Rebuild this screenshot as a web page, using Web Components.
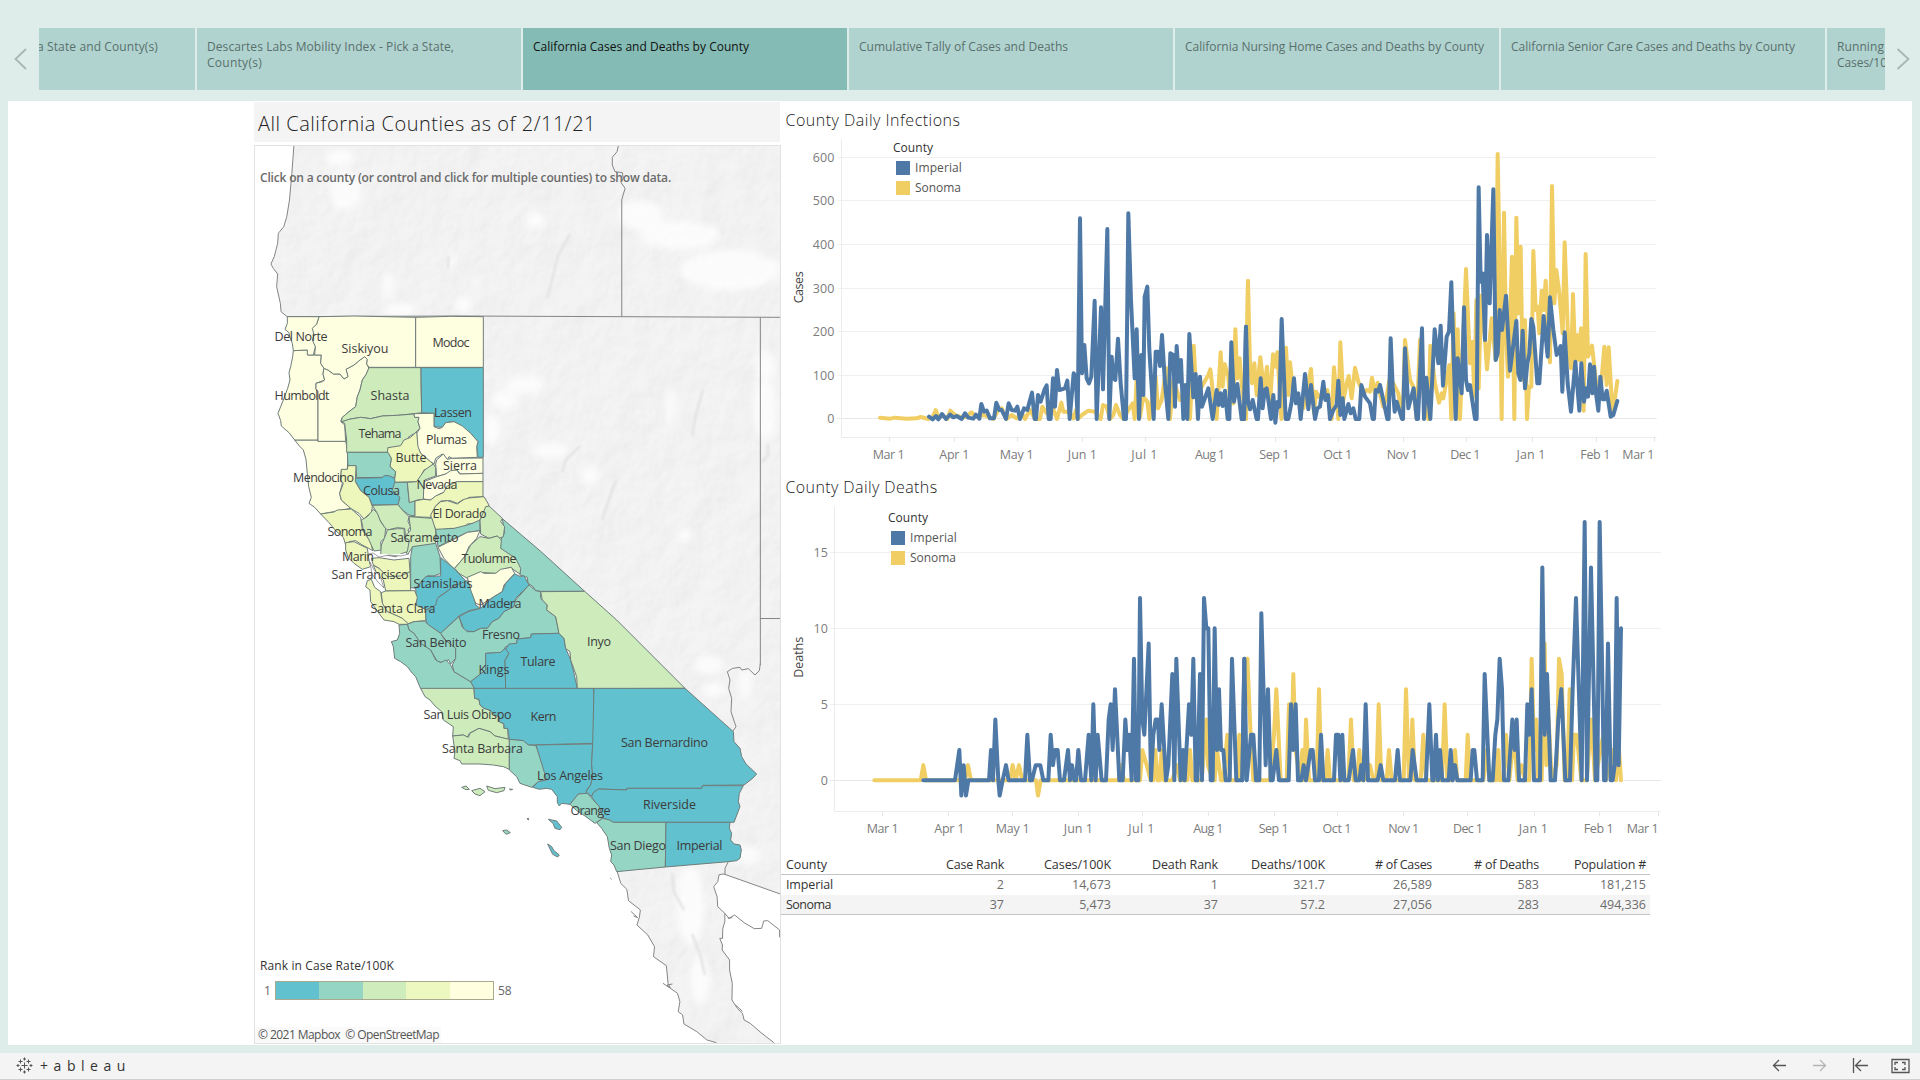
<!DOCTYPE html>
<html lang="en">
<head>
<meta charset="utf-8">
<title>California Cases and Deaths by County</title>
<style>
html,body{margin:0;height:100%;overflow:hidden}
body{font-family:"Open Sans","Noto Sans",sans-serif;font-weight:300;font-size:12px;color:#333}
</style>
</head>
<body>
<story-app></story-app>
<script>
const define = (name, html, after) => {
  const t = document.createElement('template');
  t.innerHTML = html;
  customElements.define(name, class extends HTMLElement {
    connectedCallback() {
      if (this.shadowRoot) return;
      const root = this.attachShadow({mode: 'open'});
      root.appendChild(t.content.cloneNode(true));
      if (after) after(root, this);
    }
  });
};

/* Text set to a fixed measure by adjusting its tracking. */
define('fit-text', `<style>:host{display:block;white-space:nowrap}span{display:inline-block}</style><span><slot></slot></span>`, (root, el) => {
  const s = root.querySelector('span');
  const natural = s.getBoundingClientRect().width;
  s.style.letterSpacing = ((+el.getAttribute('w') - natural) / el.textContent.length) + 'px';
});

define('story-tab', `<style>
:host{display:block;box-sizing:border-box;flex:0 0 324px;height:62px;padding:11px 10px;background:#b1d3cf;color:#58706d;line-height:16px;font-weight:400}
:host([active]){background:#84bbb4;color:#111}
:host([tail]){padding-left:166px}
</style><slot></slot>`);

define('story-nav', `<style>
:host{display:flex;height:62px;padding:28px 0 11px}
.clip{flex:1;overflow:hidden;display:flex}
.strip{display:flex;gap:2px;margin-left:-168px}
svg{display:block;flex:none;fill:none;stroke:#a9b5b2;stroke-width:1.8}
</style>
<svg width="39" height="62"><path d="M26 21L15.5 31L26 41"/></svg>
<div class="clip"><div class="strip">
<story-tab tail><fit-text w="121">a State and County(s)</fit-text></story-tab>
<story-tab><fit-text w="247">Descartes Labs Mobility Index - Pick a State,</fit-text><fit-text w="55">County(s)</fit-text></story-tab>
<story-tab active><fit-text w="216">California Cases and Deaths by County</fit-text></story-tab>
<story-tab><fit-text w="209">Cumulative Tally of Cases and Deaths</fit-text></story-tab>
<story-tab><fit-text w="299">California Nursing Home Cases and Deaths by County</fit-text></story-tab>
<story-tab><fit-text w="284">California Senior Care Cases and Deaths by County</fit-text></story-tab>
<story-tab><fit-text w="47">Running</fit-text><fit-text w="64">Cases/100K</fit-text></story-tab>
</div></div>
<svg width="35" height="62"><path d="M12.5 21L23.5 31L12.5 41"/></svg>`);

const BLUE='#62c1cf', TEAL='#94d5c4', GREEN='#cdebbb', LIME='#edf7bb', CREAM='#fefee0';
/* Each sheet of counties is drawn at three times map scale from its own origin. */
const north = [
[CREAM,'122,420 192,420 192,424 275,424 282,455 280,508 262,510 260,540 265,550 257,580 262,600 290,625 240,635 200,642 182,622 165,610 172,592 164,560 160,520 156,478 148,450 136,438'],
[CREAM,'118,152 160,150 162,165 202,165 200,190 210,205 207,222 212,240 186,250 186,268 192,275 192,420 122,420 105,398 82,378 80,362 72,340 82,315 90,295 101,265 108,240 105,218 110,200 116,170'],
[CREAM,'210,205 222,210 238,222 258,222 270,237 282,230 276,208 300,195 318,180 332,170 340,178 338,192 345,205 336,224 325,240 318,270 310,290 305,320 285,335 265,352 260,364 272,375 275,424 192,424 192,275 186,266 186,250 205,245 212,240 207,222'],
[CREAM,'195,50 300,48 485,52 485,202 345,202 338,192 340,178 332,170 318,180 300,195 276,208 282,230 270,237 258,222 238,222 222,210 210,205 200,190 202,165 182,165 184,140 172,122 180,105 172,85 188,72'],
[CREAM,'100,50 195,50 188,72 175,85 180,105 175,120 184,140 178,165 160,165 160,150 118,152 115,130 108,112 105,98 93,88 100,70'],
[CREAM,'485,52 590,49 688,50 688,202 485,202'],
[GREEN,'345,203 501,203 501,250 503,338 481,341 430,346 385,348 350,356 320,352 285,358 262,366 265,352 285,335 305,320 310,290 318,270 325,240 336,224'],
[BLUE,'501,203 688,203 688,472 672,472 668,440 672,425 650,400 600,365 575,368 565,382 540,380 540,340 503,338'],
[GREEN,'262,366 285,358 320,352 350,356 385,348 430,346 480,342 482,352 495,352 492,365 498,385 482,400 465,410 448,440 420,445 402,443 405,457 278,457 278,420 272,370'],
[CREAM,'480,341 540,340 540,380 555,386 565,382 575,368 600,365 625,378 650,400 672,425 668,440 670,472 595,475 585,470 580,480 565,462 545,475 540,492 525,482 500,460 490,440 488,400 498,385 492,365 495,352 482,352'],
[LIME,'488,395 492,440 500,460 538,492 530,502 510,510 500,530 488,545 420,547 425,515 408,500 412,475 400,458 402,443 440,437 450,420 470,412'],
[TEAL,'280,457 402,457 412,475 408,500 425,515 422,533 402,532 400,527 388,532 308,533 306,498 282,497'],
[BLUE,'300,535 385,533 390,527 405,527 422,535 424,555 415,570 438,592 432,614 355,615 345,592 320,572 308,550'],
[LIME,'262,508 280,508 282,497 306,497 304,545 320,572 345,592 355,620 352,640 342,645 330,657 315,640 290,625 262,600 257,580 268,550 260,540'],
[TEAL,'422,547 460,547 462,570 466,607 483,602 483,648 465,645 445,630 432,614 438,592 415,570'],
[GREEN,'460,547 488,545 500,527 512,510 538,492 545,502 545,528 512,540 508,598 490,600 466,608'],
[CREAM,'545,492 548,480 568,462 580,478 595,475 687,474 687,520 620,522 608,510 590,518 575,522 548,530'],
[CREAM,'510,545 548,530 575,522 590,512 608,510 617,522 687,520 687,545 610,545 592,550 580,560 575,575 558,582 540,592 530,600 508,597'],
[LIME,'508,598 530,600 545,588 568,578 580,558 610,545 687,545 687,590 645,592 635,600 625,600 610,610 590,602 560,603 545,618 530,652 466,650 483,648 483,603'],
[LIME,'545,618 560,605 580,602 610,612 630,598 645,594 690,590 705,615 695,650 680,656 672,670 640,672 622,688 590,685 560,690 545,688 535,665 530,645'],
[LIME,'200,642 240,636 250,630 292,627 320,652 325,690 350,725 356,752 344,745 325,735 305,722 285,725 275,735 268,712 245,692 225,668'],
[GREEN,'322,660 340,650 358,628 372,640 380,665 395,685 392,715 380,725 382,750 360,753 345,720 328,690'],
[GREEN,'355,616 432,614 445,630 465,650 462,665 470,680 462,690 470,710 455,712 452,685 430,683 400,690 392,682 378,660 370,640'],
[GREEN,'465,650 534,655 545,690 545,732 475,742 460,765 455,750 466,720 452,712 470,690'],
[GREEN,'395,705 400,690 430,686 450,686 452,715 466,720 460,755 445,760 425,770 395,765 380,765 382,735'],
[LIME,'275,728 300,725 320,735 340,745 345,780 350,800 325,808 300,790 282,772 275,750'],
];
const mid = [
[TEAL,'545,118 600,115 640,105 660,98 678,90 678,122 640,127 590,150 552,170'],
[CREAM,'552,172 600,148 640,127 678,122 668,145 645,170 632,200 600,237 570,205'],
[TEAL,'745,86 860,184 992,304 860,304 845,302 835,288 822,280 820,262 798,255 798,240 785,225 785,208 745,182 738,170 740,150 752,128'],
[GREEN,'695,50 705,48 745,85 740,95 752,110 748,140 735,145 730,138 705,145 680,132 678,90'],
[GREEN,'678,140 705,145 730,138 742,150 740,175 785,205 800,235 798,252 780,240 770,232 740,240 725,250 690,248 640,265 615,250 602,235 632,200 650,165'],
[TEAL,'475,170 545,160 558,200 560,250 540,258 520,257 510,268 485,295 470,293 470,200'],
[BLUE,'560,203 600,235 640,278 600,288 585,300 555,320 548,345 515,360 488,350 485,295 515,260 560,258'],
[BLUE,'550,325 585,300 600,288 640,272 655,300 665,345 678,355 645,362 615,378 560,430 520,402 515,385 515,362 545,345'],
[CREAM,'640,262 680,245 690,250 725,250 740,238 772,232 782,250 750,285 745,305 720,320 680,345 665,340 650,300'],
[BLUE,'615,380 645,364 680,355 720,320 745,305 755,280 782,252 800,260 810,257 825,285 785,325 780,350 750,365 735,385 715,395 700,415 680,415 660,425 630,423 625,405'],
[LIME,'352,205 375,203 420,210 465,205 468,245 440,262 400,260 375,235 358,225'],
[LIME,'358,226 375,235 400,260 440,258 468,245 470,302 395,303 388,270 370,255'],
[LIME,'382,308 395,303 482,302 490,322 485,345 515,358 515,392 480,395 460,402 445,385 430,378 400,365 385,340'],
[LIME,'340,272 352,268 362,292 380,305 385,340 400,365 430,378 445,385 465,403 435,403 420,395 390,390 375,370 350,335 348,300 335,290'],
[TEAL,'460,403 480,395 512,393 520,402 560,430 572,450 605,470 605,505 590,522 583,508 575,518 550,515 530,480 500,460 480,430 465,420'],
[TEAL,'435,405 460,403 465,420 480,430 500,460 530,480 545,510 560,518 575,510 590,525 600,545 650,575 662,596 500,596 485,560 475,550 460,530 440,515 422,505 418,470 412,455 430,450 437,430'],
[TEAL,'560,430 615,380 625,412 640,425 660,425 680,415 700,415 715,395 735,385 750,365 780,350 785,330 825,285 845,302 860,305 860,325 880,345 878,360 905,380 915,430 832,432 830,443 790,447 788,460 755,470 745,487 695,490 695,540 650,575 600,545 595,525 605,505 605,475 575,450'],
[BLUE,'695,490 740,487 755,473 765,490 753,510 755,596 662,596 650,575 695,540'],
[BLUE,'755,478 765,462 788,460 790,447 830,443 832,432 915,430 930,445 935,475 950,510 960,550 970,596 755,596 753,512 765,490'],
[GREEN,'860,305 992,304 1088,390 1190,492 1293,595 970,596 968,560 950,510 948,485 935,475 930,445 915,430 905,380 878,360 880,345 865,330'],
];
const south = [
[GREEN,'122,205 282,205 284,235 297,238 300,255 312,265 328,270 345,285 358,290 358,305 372,312 372,325 383,325 385,358 345,348 330,335 297,325 268,340 262,352 250,345 218,348 220,320 190,300 185,275 165,258 150,240 135,230'],
[BLUE,'282,205 640,205 642,225 640,370 445,375 430,362 388,358 383,325 372,325 372,312 358,305 358,290 345,285 328,270 312,265 300,255 297,238 284,235'],
[GREEN,'218,348 250,345 265,352 270,340 297,325 330,335 345,348 388,358 388,448 370,440 340,435 300,432 245,432 240,422 222,415 225,395'],
[TEAL,'388,358 430,362 445,375 468,377 485,425 498,460 500,478 475,485 455,502 420,490 410,470 388,450'],
[BLUE,'468,375 638,372 635,430 638,470 632,495 620,510 618,522 595,522 570,553 545,550 538,558 532,548 532,530 515,508 500,505 478,508 458,502 475,485 500,480'],
[BLUE,'642,205 915,205 1060,335 1062,365 1080,385 1085,410 1098,432 1130,462 1118,475 1092,495 968,496 965,505 740,505 740,510 655,507 638,520 635,530 618,515 632,495 638,470 635,430 638,372'],
[BLUE,'635,530 640,518 655,507 740,510 740,505 965,505 968,497 1090,497 1078,520 1075,545 1080,560 1062,607 700,607 688,600 668,595 658,560 645,545'],
[TEAL,'570,553 595,522 622,520 658,560 662,575 672,592 645,610 615,588 590,572'],
[TEAL,'650,608 668,595 688,600 700,607 858,607 856,741 710,755 702,735 692,725 695,705 688,685 682,650 665,625'],
[BLUE,'858,607 1050,607 1048,625 1055,640 1052,660 1062,672 1080,675 1084,690 1080,715 1070,722 1045,725 856,741'],
[GREEN,'245,502 258,498 268,508 258,509'],[GREEN,'275,512 300,505 315,515 300,527 285,522'],
[GREEN,'320,498 345,506 375,502 372,512 350,518 325,511'],
[TEAL,'368,632 380,630 391,638 378,643'],[BLUE,'505,598 530,603 545,622 540,629 525,625 519,610'],
[BLUE,'503,672 515,680 522,692 538,705 533,711 518,703'],[GREEN,'388,507 398,508 392,510'],[TEAL,'441,596 446,595 445,600'],
];
/* County label: text, centre x, centre y, width, in map pixels. */
const labels = [['Del Norte',301,337,53],['Siskiyou',365,349,47],['Modoc',451,342.5,37],['Humboldt',302,396,55],['Shasta',390,396,39],['Lassen',453,413,38],['Tehama',380,434,43],['Plumas',446.5,439.5,41],['Butte',411,458,31],['Sierra',460,466,34],['Mendocino',323.5,477.5,61],['Colusa',381.5,491,37],['Nevada',437,485,41],['El Dorado',459.5,514,54],['Sonoma',350,532,45],['Sacramento',424.5,538,68],['Marin',358,557,32],['San Francisco',370,574.5,77],['Tuolumne',489,558.5,55],['Stanislaus',443,583.5,59],['Santa Clara',403,609,65],['Madera',500,604,43],['San Benito',436,643,61],['Fresno',501,634.5,38],['Inyo',599,641.5,24],['Kings',494,670,31],['Tulare',538,661.5,35],['San Luis Obispo',467.5,715,88],['Kern',543.5,717,26],['San Bernardino',664.5,742.5,87],['Santa Barbara',482.5,749,81],['Los Angeles',570,775.5,66],['Riverside',669.5,805,53],['Orange',590.5,810.5,40],['San Diego',638,845.500,56],['Imperial',699.5,845.500,46]];

const coastOR='118,18 112,100 105,180 97,230 88,260 72,280 70,310 60,350 50,372 57,385 70,402 67,440 78,490 80,515 98,530';
const coastBaja='1075,66 1085,100 1103,118 1108,152 1143,180 1140,202 1133,225 1165,255 1185,290 1182,320 1220,347 1225,400 1232,415 1253,430 1260,455 1255,485 1268,495 1272,522 1310,545 1340,570 1368,578';
const coastGulf='1390,72 1376,74 1372,95 1360,110 1370,140 1372,170 1393,190 1393,215 1387,235 1386,265 1378,265 1386,285 1385,300 1407,330 1407,360 1415,400 1414,450 1430,475 1445,490 1450,510 1468,520 1500,548 1538,578';
const P6='translate(254 140) scale(.33801 .33333)', P11='translate(254 850) scale(.33801 .33333)';
const white=[[340,158,14,9],[345,190,16,20],[535,220,10,8],[451,262,4,10],[530,240,4,3],[388,285,5,14],[400,310,16,7],[463,305,8,9],[475,280,3,6],[640,215,22,15],[680,235,40,14],[730,270,50,20],[525,385,20,9],[505,400,12,10],[550,450,18,8],[492,430,8,16],[765,410,12,30],[670,405,4,18],[590,475,10,10],[685,535,8,6],[745,685,6,16],[710,665,14,10],[690,905,14,40],[700,980,10,25],[745,855,15,10],[765,365,10,16],[715,690,12,7]];
const ridges=['M570 234L558 256L552 280L547 298','M703 390L696 414L692 436','M580 446L566 460L562 472','M616 480L606 508L602 520','M672 873L674 892L684 910','M692 934L700 954L705 975','M768 445L768 455L762 462','M448 256V268'];

define('county-map', `<style>
:host{display:block;box-sizing:border-box;width:527px;height:899px;border:1px solid #e2e2e2;position:relative;overflow:hidden;background:#fff}
svg{display:block;margin:-1px}
.edge path,.edge polyline{fill:none;stroke:#858585;stroke-width:1;vector-effect:non-scaling-stroke}
polygon{stroke:#6f7d7a;stroke-width:1;stroke-linejoin:round;vector-effect:non-scaling-stroke}
text{font:400 12.5px "Open Sans","Noto Sans",sans-serif;text-anchor:middle;fill:#3c3c3c}
.hint,.legend,.credit{position:absolute;left:5px;color:#6b6b6b}
.hint{top:24px;font-weight:600;line-height:16px}
.legend{top:812px;font-weight:400;color:#333;line-height:16px}
.ramp{display:flex;align-items:center;gap:4px;margin:7px 0 0 4px;color:#666}
.bar{display:flex;box-sizing:border-box;width:219px;height:19px;border:1px solid #a9a98f}
.bar i{flex:1}
.credit{left:0;bottom:0;padding:0 2px 0 3px;line-height:16px;font-weight:400;background:#fafafa;color:#555}
</style>
<svg width="527" height="899" viewBox="254 145 527 899">
<defs>
<filter id="relief" x="0" y="0" width="100%" height="100%" color-interpolation-filters="sRGB">
<feTurbulence type="fractalNoise" baseFrequency=".028 .024" numOctaves="4" seed="8" result="n"/>
<feDiffuseLighting in="n" surfaceScale="1.6" diffuseConstant="1.1" lighting-color="#fff"><feDistantLight azimuth="225" elevation="60"/></feDiffuseLighting>
<feColorMatrix type="matrix" values=".22 0 0 0 .738 0 .22 0 0 .738 0 0 .22 0 .738 0 0 0 1 0"/>
</filter>
<filter id="soft" x="-30%" y="-30%" width="160%" height="160%"><feGaussianBlur stdDeviation="3.5"/></filter>
<filter id="soft1"><feGaussianBlur stdDeviation="1"/></filter>
<clipPath id="land">
<polygon transform="${P6}" points="${coastOR} 1560,532 1560,18"/>
<polygon points="287,316 781,316 781,894 724,874 640,869 640,800 610,780 540,740 470,690 435,640 425,540 350,500 310,400"/>
<polygon transform="${P11}" points="${coastBaja} 1538,578 ${coastGulf.split(' ').reverse().join(' ')} 1402,38"/>
</clipPath>
</defs>
<g clip-path="url(#land)"><rect x="254" y="145" width="527" height="899" filter="url(#relief)"/>
<g id="w" fill="#fff" opacity=".75" filter="url(#soft)"></g>
<g fill="none" stroke="#e2e2e2" stroke-width="2.4" filter="url(#soft1)">${ridges.map(d=>`<path d="${d}"/>`).join('')}</g></g>
<g class="edge">
<g transform="${P6}"><polyline points="${coastOR}"/><path d="M98 530L600 528L1557 532M1078 18L1074 35L1060 52L1060 75L1068 95L1090 98L1092 115L1086 128L1098 145L1092 165L1088 180V530M1498 532V1575"/></g>
<path d="M760 618.5H781"/>
<g transform="translate(380 620) scale(.33333)"><path d="M1141 130L1138 152L1125 165L1105 146L1085 150L1080 142L1058 145L1042 155L1050 180L1046 205L1055 235L1053 275L1068 320L1058 335M1045 725L1035 745V764"/></g>
<g transform="${P11}"><polyline points="${coastBaja}"/><polyline points="${coastGulf}"/><path d="M1390 72L1557 132M1393 190L1405 205L1422 195L1450 218L1480 236L1502 235L1508 213L1520 212L1555 240V262M1115 184L1135 203L1123 198M1210 400L1232 415L1222 405L1238 402M1054 84L1058 88M1425 465L1445 484M1402 205L1415 203"/></g>
</g>
<g id="n" transform="translate(254 300) scale(.33333)"></g>
<g id="m" transform="translate(254 490) scale(.33333)"></g>
<g id="s" transform="translate(380 620) scale(.33333)"></g>
<path d="M368 554l5 -1 6 4 10 -2 12 1 8 -2M370 562l4 8 6 6 4 12-6-6-6-8z" fill="#fff" stroke="#8c8c8c" stroke-width=".8"/>
<g id="t"></g>
</svg>
<fit-text class="hint" w="411">Click on a county (or control and click for multiple counties) to show data.</fit-text>
<div class="legend"><fit-text w="134">Rank in Case Rate/100K</fit-text>
<div class="ramp"><span>1</span><div class="bar"><i style="background:#62c1cf"></i><i style="background:#94d5c4"></i><i style="background:#cfecbc"></i><i style="background:#edf7c0"></i><i style="background:#ffffdf"></i></div><span>58</span></div></div>
<fit-text class="credit" w="181">© 2021 Mapbox&nbsp; © OpenStreetMap</fit-text>`, root => {
  const poly = a => a.map(([f, p]) => `<polygon fill="${f}" points="${p}"/>`).join('');
  root.getElementById('n').innerHTML = poly(north);
  root.getElementById('m').innerHTML = poly(mid);
  root.getElementById('s').innerHTML = poly(south);
  root.getElementById('w').innerHTML = white.map(([x,y,a,b]) => `<ellipse cx="${x}" cy="${y}" rx="${a}" ry="${b}"/>`).join('');
  root.getElementById('t').innerHTML = labels.map(([s,x,y,w]) => `<text x="${x}" y="${y+4.3}" textLength="${w}">${s}</text>`).join('');
});

define('color-legend', `<style>
:host{display:flex;flex-direction:column;gap:4px;line-height:16px;color:#555;font-weight:400}
.h{font-weight:500;color:#333}
.r{display:flex;align-items:center;gap:5px;padding-left:3px}
i{width:14px;height:14px;background:#4e79a7}.y{background:#f0ce63}
</style><fit-text class="h" w="40">County</fit-text>
<div class="r"><i></i><fit-text w="47">Imperial</fit-text></div><div class="r"><i class="y"></i><fit-text w="46">Sonoma</fit-text></div>`);

/* Series points are on a 3x grid from the chart origin; the second half starts 1380 units in. */
const xy = s => s.trim().split(/\s+/);
const val = s => xy(s).map(p => { const [x, v] = p.split(':'); return x + ',' + (931 - 45.6 * v).toFixed(1); });
const charts = {
cases: {h:370, left:184, right:2630, top:118, bottom:1012, zero:956, title:'Cases', ty:562, tw:32, labelY:1063, endY:16,
 grid:[[600,172],[500,301],[400,433],[300,565],[200,695],[100,827],[0,956]],
 ticks:[['Mar 1',326,329],['Apr 1',523,523],['May 1',710,712],['Jun 1',907,907],['Jul 1',1093,1097],['Aug 1',1290,1291],['Sep 1',1483,1487],['Oct 1',1673,1675],['Nov 1',1867,1871],['Dec 1',2056,2059],['Jan 1',2253,2256],['Feb 1',2446,2450],['Mar 1',2575,2622]],
 yellow:[xy(`300,953 330,956 345,953 380,956 410,955 422,951 445,957 458,952 467,930 475,952 490,947 502,957 511,932 525,945 545,952 560,950 574,937 590,950 610,945 640,957 655,930 665,925 680,957 695,945 710,955 725,940 735,957 750,930 765,957 780,957 787,920 800,940 819,925 831,957 844,908 850,935 860,935 870,940 880,955 888,930 893,957 906,945 925,932 945,935 962,957 969,915 980,920 990,957 1000,945 1008,915 1020,945 1030,957 1045,930 1058,910 1064,957 1070,840 1080,950 1090,890 1102,905 1108,957 1120,870 1127,830 1134,925 1145,900 1155,830 1162,805 1170,957 1180,840 1190,870 1200,900 1215,880 1230,957 1241,737 1250,900 1265,860 1285,825 1291,808 1298,870 1310,957 1322,757 1328,860 1334,792 1345,830 1350,900 1360,910 1366,688 1372,835 1379,775 1385,850 1397,957 1404,543`),
 xy(`18,957 24,543 30,800 36,850 43,790 50,885 61,772 72,870 81,800 90,920 99,763 106,800 112,757 124,957 138,743 145,885 150,787 160,880 175,900 190,925 213,807 222,940 228,875 235,890 250,880 262,870 275,957 282,802 295,957 301,727 310,900 320,850 326,828 335,895 345,803 355,845 370,880 380,870 390,875 396,833 405,880 413,848 420,880 430,920 440,890 448,840 460,850 475,880 488,957 495,720 510,840 520,860 530,957 540,720 552,900 565,957 571,737 585,850 597,908 605,880 610,895 628,795 634,957 641,640 648,957 653,688 660,957 678,507 690,790 697,725 703,890 709,600 716,865 723,587 735,720 741,808 755,655 767,780 773,162 779,500 785,957 792,338 798,700 804,830 816,470 823,957 829,353 836,640 842,440 848,840 855,660 861,957 867,860 874,860 880,453 887,630 893,620 898,700 905,572 911,630 917,542 930,787 936,258 943,610 949,510 958,580 968,700 974,427 985,740 993,805 999,582 1006,790 1012,705 1018,780 1023,685 1031,932 1037,462 1044,770 1056,737 1070,860 1082,870 1093,740 1100,855 1106,742 1118,945 1132,843`)],
 blue:[xy(`447,950 458,958 468,948 475,958 486,942 498,957 510,944 520,952 530,948 545,957 555,940 565,953 580,956 588,944 598,956 604,912 612,935 620,932 630,955 642,955 649,908 658,930 665,930 678,957 686,910 695,930 705,932 712,920 720,957 732,925 742,930 756,878 764,957 768,957 774,885 782,905 793,870 800,856 806,957 812,957 819,835 825,920 831,810 838,870 855,865 862,842 869,957 881,820 887,830 893,957 900,355 906,820 913,735 920,835 927,850 934,830 944,602 950,957 963,622 969,868 982,387 988,957 995,770 1000,835 1006,840 1014,716 1022,850 1032,957 1038,957 1045,340 1053,600 1064,835 1070,688 1077,957 1084,765 1090,885 1094,590 1102,560 1108,750 1121,957 1127,755 1134,755 1140,798 1146,705 1155,850 1165,957 1171,760 1180,765 1185,920 1190,738 1197,845 1203,780 1210,957 1216,855 1222,957 1228,702 1240,892 1247,822 1254,957 1260,830 1266,920 1285,865 1298,957 1310,870 1316,915 1322,880 1328,918 1335,872 1343,957 1348,957 1354,727 1362,905 1372,852 1385,957 1392,957 1398,680`),
 xy(`5,957 12,957 18,680 24,905 30,928 38,900 50,957 54,957 62,835 68,925 74,870 80,865 93,957 100,885 106,968 113,905 118,920 125,657 137,957 145,957 155,905 162,835 168,910 175,880 182,957 195,822 205,928 213,855 225,957 232,925 240,920 250,845 256,900 264,885 270,957 280,930 290,915 295,842 301,945 308,895 313,957 325,912 332,940 340,925 347,957 358,957 364,855 375,890 390,910 398,957 402,957 407,870 414,875 420,855 432,910 442,957 446,957 452,715 458,860 464,935 470,905 486,957 489,957 495,745 505,925 521,865 530,957 534,957 546,685 552,957 559,833 571,957 584,688 595,790 602,677 609,857 620,710 627,695 634,547 647,957 653,775 665,880 672,622 678,840 684,870 690,855 705,957 710,957 716,262 722,545 728,520 735,720 741,405 749,610 760,268 767,780 773,760 779,630 786,690 798,587 810,812 829,663 835,820 841,840 848,692 855,865 862,790 868,760 874,657 880,680 892,850 898,850 911,648 923,770 930,592 940,690 950,765 962,738 967,875 974,697 983,850 993,935 1006,785 1018,932 1024,790 1032,905 1038,865 1044,890 1050,793 1057,880 1062,800 1068,880 1075,932 1081,830 1088,898 1094,898 1100,872 1112,950 1120,945 1132,903`)]},
deaths: {h:380, left:163, right:2643, top:110, bottom:1024, zero:931, title:'Deaths', ty:562, tw:41, labelY:1075,
 grid:[[15,247],[10,475],[5,703],[0,931]],
 ticks:[['Mar 1',308,307],['Apr 1',508,505],['May 1',698,698],['Jun 1',895,895],['Jul 1',1084,1088],['Aug 1',1285,1286],['Sep 1',1481,1484],['Oct 1',1671,1673],['Nov 1',1871,1871],['Dec 1',2064,2063],['Jan 1',2260,2262],['Feb 1',2456,2459],['Mar 1',2588,2636]],
 yellow:[val(`283:0 422:0 430:1 438:0 555:0 564:1 573:0 690:0 698:1 707:0 717:1 727:0 768:0 774:-1 782:0 1015:0 1024:1 1032:0 1080:0 1087:2 1100:1 1112:0 1120:0 1126:2 1133:0 1139:0 1145:2 1152:0 1177:0 1190:1 1200:0 1222:0 1230:2 1237:0 1265:0 1272:2 1279:4 1284:1 1298:0 1304:0 1311:2 1323:0 1330:0 1342:3 1350:0 1372:0 1378:3 1385:0 1391:3 1402:8`),
 val(`11:3 22:8 32:3 40:0 50:0 90:0 102:3 109:6 122:0 140:0 147:5 154:2 160:7 167:2 180:0 187:2 193:0 198:4 207:0 230:0 237:6 244:0 256:0 263:2 270:0 325:0 333:4 341:0 352:0 358:2 365:0 372:0 390:1 400:0 409:0 416:5 424:0 440:0 447:2 455:0 491:0 498:6 507:0 512:0 517:4 525:0 542:0 550:3 558:0 606:0 614:5 622:0 637:0 645:2 652:0 677:0 683:3 690:0 730:0 740:2 748:0 768:0 775:2 779:0 790:0 798:3 808:0 817:2 825:2 833:0 845:1 855:0 868:0 875:8 882:2 889:4 895:0 905:0 914:9 919:1 926:4 935:0 950:1 957:8 965:7 974:0 982:0 989:6 996:0 1002:3 1010:3 1024:0 1040:0 1054:4 1065:0 1090:3 1098:0 1110:1 1118:2 1128:0 1137:2 1143:0`)],
 blue:[val(`430:0 525:0 538:2 544:-1 551:1 558:-1 565:0 627:0 633:2 639:0 646:4 655:0 659:-1 668:0 678:1 686:0 735:0 742:3 750:0 756:0 767:1 781:1 790:0 805:0 812:3 819:1 825:2 833:2 840:0 852:0 864:2 870:0 876:1 883:0 888:0 895:2 903:0 915:0 926:3 934:0 940:5 947:0 953:3 965:0 978:0 986:4 992:5 998:2 1005:6 1018:0 1028:0 1036:4 1042:2 1048:3 1055:0 1062:8 1068:0 1075:0 1080:12 1087:4 1093:3 1106:9 1113:0 1120:3 1127:4 1134:4 1138:2 1145:5 1158:0 1165:1 1177:7 1183:0 1189:8 1202:0 1209:2 1214:0 1227:5 1234:3 1240:8 1247:0 1252:0 1260:7 1266:0 1272:12 1279:10 1285:10 1292:0 1298:0 1304:10 1311:2 1317:6 1323:2 1330:2 1337:0 1349:0 1356:8 1369:0 1387:0 1393:8`),
 val(`7:0 13:8 20:0 33:3 40:3 48:0 58:0 64:11 77:1 84:6 92:0 98:0 109:2 117:0 146:0 153:5 160:2 167:5 174:0 184:0 191:1 198:0 212:2 218:2 225:0 237:0 243:3 250:0 282:0 288:3 295:3 301:0 307:3 313:0 326:0 339:2 347:0 358:0 364:1 370:0 377:5 384:0 413:0 422:1 430:0 465:0 473:2 480:0 511:0 518:2 530:0 558:0 568:5 577:0 581:0 588:3 594:0 600:2 607:0 626:0 632:2 638:0 645:1 652:0 692:0 698:2 703:2 711:0 728:0 734:7 748:0 758:0 766:3 772:4 779:8 786:6 792:0 805:0 817:4 824:2 830:4 837:0 855:0 862:5 868:3 875:6 882:0 900:0 907:14 914:3 921:7 932:0 945:0 955:4 964:6 976:0 990:0 998:6 1008:12 1025:0 1034:17 1041:0 1053:14 1067:0 1072:0 1079:17 1092:0 1097:0 1104:9 1112:0 1118:0 1124:1 1130:12 1136:1 1143:10`)]}};

define('day-chart', `<style>
:host{display:block;position:relative}
svg{display:block}
h2{position:absolute;margin:0;font-size:16px;font-weight:300;color:#222;line-height:22px;left:4.5px}
color-legend{position:absolute}
text{font:400 12.5px "Open Sans","Noto Sans",sans-serif;fill:#7c7c7c}
.ax{font-weight:400;fill:#444;text-anchor:middle}
</style><h2></h2><div id="c"></div><color-legend></color-legend>`, (root, el) => {
  const k = el.getAttribute('kind'), c = charts[k], u = n => n / 3;
  root.querySelector('h2').innerHTML = k === 'cases' ? '<fit-text w="175">County Daily Infections</fit-text>' : '<fit-text w="152">County Daily Deaths</fit-text>';
  root.querySelector('h2').style.top = k === 'cases' ? '7.5px' : '6px';
  const lg = root.querySelector('color-legend');
  lg.style.left = k === 'cases' ? '112px' : '107px'; lg.style.top = k === 'cases' ? '39px' : '40px';
  const oy = k === 'cases' ? 1 : 0;
  let s = `<svg width="900" height="${c.h - oy}" viewBox="1 ${oy} 900 ${c.h - oy}">`;
  const r = n => Math.round(n) + .5;
  for (const [v, y] of c.grid) {
    s += v ? `<path d="M${u(c.left)-4} ${r(u(y)-.5)}H${u(c.right)}" stroke="#f0f0f0"/>` : `<path d="M${u(c.left)-4} ${r(u(y)-.5)}H${u(c.right)}" stroke="#cfcfcf" stroke-dasharray="1 1"/>`;
    s += `<text x="${u(k==='cases'?163:144)}" y="${u(y)+4.8}" text-anchor="end" textLength="${String(v).length*7.2}">${v}</text>`;
  }
  s += `<path d="M${r(u(c.left)-.5)} ${u(c.top)}V${r(u(c.bottom)-.5)}H${u(c.right)}" fill="none" stroke="#ececec"/>`;
  for (const [t, x, tx] of c.ticks) s += `<path d="M${r(u(tx)-.5)} ${u(c.bottom)}v4.5" stroke="#e6e6e6"/><text x="${u(x)}" y="${u(c.labelY)+4.5}" text-anchor="middle" textLength="${{M:t[2]==='y'?34:32,A:30,J:t[2]==='l'?26:29,S:30,O:29,N:31,D:30,F:30}[t[0]]}">${t}</text>`;
  s += `<text class="ax" transform="translate(22.5 ${u(c.ty)}) rotate(-90)" textLength="${c.tw}">${c.title}</text>`;
  const line = (p, col, dx) => `<polyline transform="translate(${dx} 0) scale(.33333)" points="${p.join(' ')}" fill="none" stroke="${col}" stroke-width="12" stroke-linejoin="round" stroke-linecap="round"/>`;
  s += line(c.yellow[0],'#f0ce63',0) + line(c.yellow[1],'#f0ce63',460) + line(c.blue[0],'#4e79a7',0) + line(c.blue[1],'#4e79a7',460) + '</svg>';
  root.getElementById('c').innerHTML = s;
});

define('rank-table', `<style>
:host{display:block;width:869px;margin-top:5px;color:#6c6c6c;font-weight:400}
.r{display:grid;grid-template-columns:120px repeat(7,107px);height:20px;line-height:20px;text-align:right;box-sizing:border-box;font-size:12.5px}
.r>*{padding-right:4px;display:flex;justify-content:flex-end}
.r>:first-child{justify-content:flex-start;padding-left:5px;color:#333}
.h{color:#333;border-bottom:1px solid #c4c4c4}
.z{background:#f4f4f4;border-bottom:1px solid #c4c4c4;line-height:19px}
</style>
<div class="r h"><fit-text w="41">County</fit-text><fit-text w="58">Case Rank</fit-text><fit-text w="67">Cases/100K</fit-text><fit-text w="66">Death Rank</fit-text><fit-text w="74">Deaths/100K</fit-text><fit-text w="57">#&nbsp;of Cases</fit-text><fit-text w="65">#&nbsp;of Deaths</fit-text><fit-text w="72">Population #</fit-text></div>
<div class="r"><fit-text w="47">Imperial</fit-text><span>2</span><span>14,673</span><span>1</span><span>321.7</span><span>26,589</span><span>583</span><span>181,215</span></div>
<div class="r z"><fit-text w="45">Sonoma</fit-text><span>37</span><span>5,473</span><span>37</span><span>57.2</span><span>27,056</span><span>283</span><span>494,336</span></div>`);

define('viz-toolbar', `<style>
:host{display:flex;justify-content:space-between;align-items:center;box-sizing:border-box;height:27px;background:#f4f4f4;border-bottom:1px solid #d0d0d0;padding:0 12px 1px 16px}
.logo{display:flex;align-items:center;gap:7px;color:#333;font:400 14px "Open Sans",sans-serif;line-height:20px}
svg{display:block;fill:none;stroke:#555;stroke-width:1.3}
.logo svg{stroke-width:1}
</style>
<div class="logo"><svg width="17" height="17"><path d="M8.500 5.500v6M5.500 8.500h6M4.500 2.500v4M2.500 4.500h4M12.500 2.500v4M10.500 4.500h4M4.500 10.500v4M2.500 12.500h4M12.500 10.500v4M10.500 12.500h4M8.500 .500v3M7 2h3M8.500 13.500v3M7 15h3M.5 8.500h3M2 7v3M13.500 8.500h3M15 7v3"/></svg><fit-text w="91">+ableau</fit-text></div>
<svg width="140" height="25"><path d="M18 12.500H5.500M11 7L5.500 12.500L11 18"/><path stroke="#b5b5b5" d="M45 12.500H57.500M52 7L57.500 12.500L52 18"/><path d="M85.500 5V20M100 12.500H87.500M93 7L87.500 12.500L93 18"/><path d="M123.500 6.500h17v13h-17z" transform="translate(.5 0)"/><path d="M130 9.500h-3v2.500M134 9.500h3v2.500M130 16.500h-3v-2.500M134 16.500h3v-2.500"/></svg>`, root => {
  root.lastElementChild.style.overflow = 'visible';
});

define('story-app', `<style>
:host{display:flex;flex-direction:column;width:1920px;height:1080px;background:#dfedea;overflow:hidden}
main{display:flex;box-sizing:border-box;margin:0 8px 8px;height:944px;background:#fff;padding:1px 0 0 246px}
.left{display:flex;flex-direction:column;width:527px;gap:3px}
h1{box-sizing:border-box;margin:0;width:526px;height:40px;padding-left:4px;background:#f4f4f4;font-size:20px;font-weight:300;line-height:43px;color:#222}
.right{display:flex;flex-direction:column;margin-top:-1px}
</style>
<story-nav></story-nav>
<main><div class="left"><h1><fit-text w="338">All California Counties as of 2/11/21</fit-text></h1><county-map></county-map></div>
<div class="right"><day-chart kind="cases"></day-chart><day-chart kind="deaths"></day-chart><rank-table></rank-table></div></main>
<viz-toolbar></viz-toolbar>`);
</script>
</body>
</html>
